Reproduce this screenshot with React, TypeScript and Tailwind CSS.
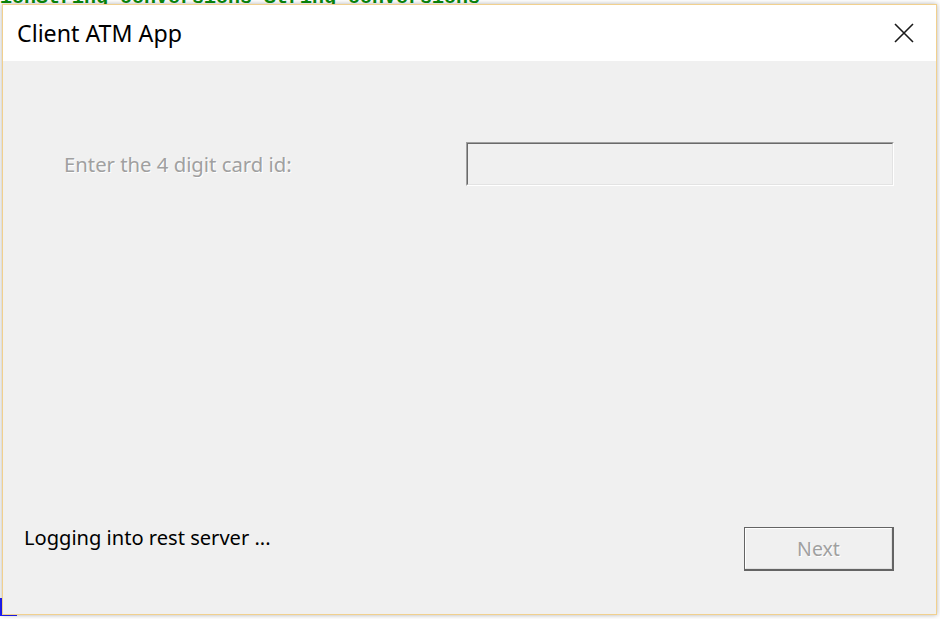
const font = { fontFamily: '"Noto Sans", "Open Sans", sans-serif' };

const CloseIcon = () => (
  <svg width="20" height="20" viewBox="0 0 20 20" className="block">
    <path d="M1 1 L19 19 M19 1 L1 19" stroke="#1a1a1a" strokeWidth="1.6" fill="none" />
  </svg>
);

export default function App() {
  return (
    <div
      className="relative h-[619px] w-[940px] overflow-hidden bg-white"
      style={font}
    >
      {/* console text behind the dialog */}
      <div className="absolute left-0 top-[-17px] whitespace-nowrap font-['Liberation_Mono',monospace] text-[20px] font-bold text-[#0a8a0a]">
        ionString conversions String conversions
      </div>
      <div className="absolute bottom-[3px] left-0 h-[18px] w-[17px] border-b-2 border-l-2 border-[#1f1fff]" />

      {/* dialog window */}
      <div className="absolute left-[2px] top-[4px] flex h-[611px] w-[935px] flex-col border border-[#f1d08e] bg-[#f0f0f0] shadow-[0_0_5px_rgba(0,0,0,0.3)]">
        <div className="flex h-[56px] items-center justify-between bg-white pl-[14px] pr-[22px]">
          <span className="mt-[1px] text-[23.2px] text-black">Client ATM App</span>
          <CloseIcon />
        </div>

        <div className="flex flex-1 flex-col px-[21px] pt-[81px] pb-[43px]">
          <div className="flex items-center justify-between pl-[40px] pr-[21px]">
            <span className="text-[20.3px] text-[#a0a0a0] [text-shadow:1px_1px_0_#fff]">
              Enter the 4 digit card id:
            </span>
            <div className="h-[44px] w-[428px] border-t border-l border-b border-r border-t-[#a0a0a0] border-l-[#a0a0a0] border-b-white border-r-white">
              <div className="h-full w-full border-t border-l border-b border-r border-t-[#6a6a6a] border-l-[#6a6a6a] border-b-[#e3e3e3] border-r-[#e3e3e3] bg-[#f0f0f0]" />
            </div>
          </div>

          <div className="mt-auto flex items-start justify-between pr-[21px]">
            <span className="-mt-[4px] text-[20.1px] text-black">Logging into rest server ...</span>
            <div className="h-[44px] w-[150px] border border-b-2 border-r-2 border-[#646464]">
              <div className="flex h-full w-full items-center justify-center border border-white border-b-[#e0e0e0] border-r-[#e0e0e0] text-[19.5px] text-[#a0a0a0] [text-shadow:1px_1px_0_#fff]">
                Next
              </div>
            </div>
          </div>
        </div>
      </div>
    </div>
  );
}
